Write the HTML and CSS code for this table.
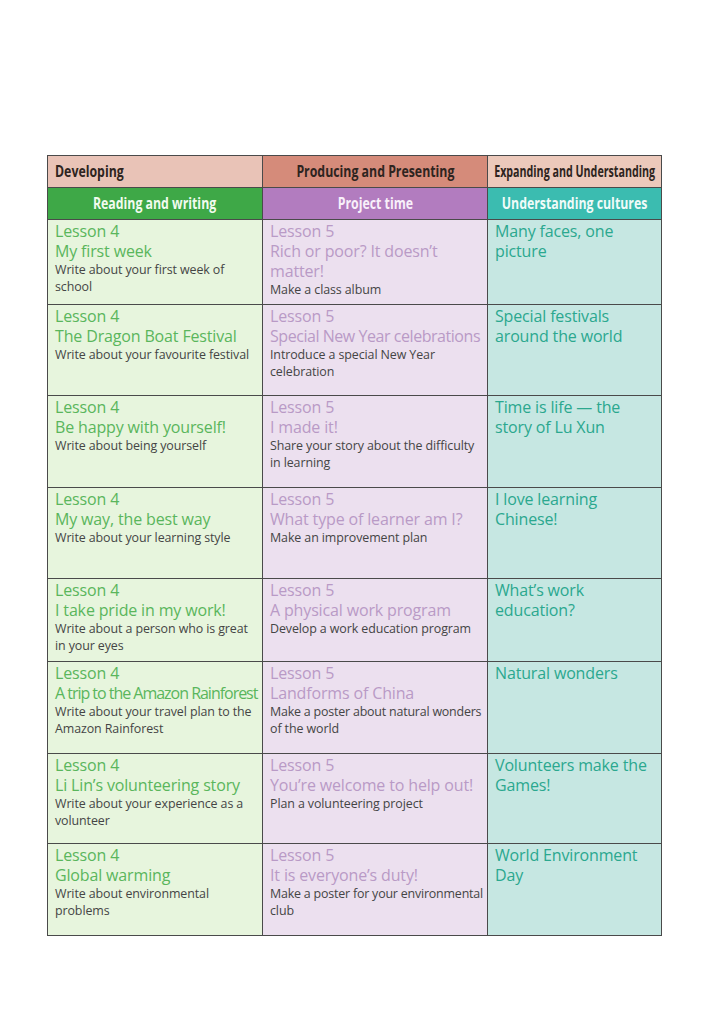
FILE: index.html
```html
<!DOCTYPE html>
<html lang="en">
<head>
<meta charset="utf-8">
<title>Lessons</title>
<link rel="stylesheet" href="styles.css">
</head>
<body>
<main class="page">
<table class="plan">
  <colgroup><col class="c1"><col class="c2"><col class="c3"></colgroup>
  <thead>
    <tr class="h1">
      <th class="h1a"><div class="hl"><span class="sq sl">Developing</span></div></th>
      <th class="h1b"><div class="hc"><span class="sq">Producing and Presenting</span></div></th>
      <th class="h1c"><div class="hc"><span class="sq sx">Expanding and Understanding</span></div></th>
    </tr>
    <tr class="h2">
      <th class="h2a"><div class="hc"><span class="sq">Reading and writing</span></div></th>
      <th class="h2b"><div class="hc"><span class="sq">Project time</span></div></th>
      <th class="h2c"><div class="hc"><span class="sq">Understanding cultures</span></div></th>
    </tr>
  </thead>
  <tbody>
    <tr class="r85">
      <td class="ca"><div class="t">Lesson 4</div><div class="t">My first week</div><div class="d">Write about your first week of school</div></td>
      <td class="cb"><div class="t">Lesson 5</div><div class="t">Rich or poor? It doesn’t matter!</div><div class="d">Make a class album</div></td>
      <td class="cc"><div class="t">Many faces, one picture</div></td>
    </tr>
    <tr class="r91">
      <td class="ca"><div class="t">Lesson 4</div><div class="t">The Dragon Boat Festival</div><div class="d">Write about your favourite festival</div></td>
      <td class="cb"><div class="t">Lesson 5</div><div class="t nw snug">Special New Year celebrations</div><div class="d">Introduce a special New Year celebration</div></td>
      <td class="cc"><div class="t">Special festivals around the world</div></td>
    </tr>
    <tr class="r92">
      <td class="ca"><div class="t">Lesson 4</div><div class="t">Be happy with yourself!</div><div class="d">Write about being yourself</div></td>
      <td class="cb"><div class="t">Lesson 5</div><div class="t">I made it!</div><div class="d">Share your story about the difficulty in learning</div></td>
      <td class="cc"><div class="t">Time is life — the story of Lu Xun</div></td>
    </tr>
    <tr class="r91">
      <td class="ca"><div class="t">Lesson 4</div><div class="t">My way, the best way</div><div class="d">Write about your learning style</div></td>
      <td class="cb"><div class="t">Lesson 5</div><div class="t">What type of learner am I?</div><div class="d">Make an improvement plan</div></td>
      <td class="cc"><div class="t">I love learning Chinese!</div></td>
    </tr>
    <tr class="r83">
      <td class="ca"><div class="t">Lesson 4</div><div class="t">I take pride in my work!</div><div class="d">Write about a person who is great in your eyes</div></td>
      <td class="cb"><div class="t">Lesson 5</div><div class="t">A physical work program</div><div class="d">Develop a work education program</div></td>
      <td class="cc"><div class="t">What’s work education?</div></td>
    </tr>
    <tr class="r92">
      <td class="ca"><div class="t">Lesson 4</div><div class="t nw tight">A trip to the Amazon Rainforest</div><div class="d">Write about your travel plan to the Amazon Rainforest</div></td>
      <td class="cb"><div class="t">Lesson 5</div><div class="t">Landforms of China</div><div class="d nw dsnug">Make a poster about natural wonders</div><div class="d">of the world</div></td>
      <td class="cc"><div class="t">Natural wonders</div></td>
    </tr>
    <tr class="r90">
      <td class="ca"><div class="t">Lesson 4</div><div class="t">Li Lin’s volunteering story</div><div class="d">Write about your experience as a volunteer</div></td>
      <td class="cb"><div class="t">Lesson 5</div><div class="t">You’re welcome to help out!</div><div class="d">Plan a volunteering project</div></td>
      <td class="cc"><div class="t">Volunteers make the Games!</div></td>
    </tr>
    <tr class="r92">
      <td class="ca"><div class="t">Lesson 4</div><div class="t">Global warming</div><div class="d">Write about environmental problems</div></td>
      <td class="cb"><div class="t">Lesson 5</div><div class="t">It is everyone’s duty!</div><div class="d nw dsnug">Make a poster for your environmental</div><div class="d">club</div></td>
      <td class="cc"><div class="t">World Environment Day</div></td>
    </tr>
  </tbody>
</table>
</main>
</body>
</html>
```

FILE: styles.css
```css
html, body {
  margin: 0;
  padding: 0;
  background: #ffffff;
}
body {
  font-family: "Open Sans", "Noto Sans", sans-serif;
  color: #3a3a3a;
}
.page {
  padding: 155px 0 0 47px;
}
.plan {
  border-collapse: collapse;
  table-layout: fixed;
  width: 615px;
  border: 1.5px solid #4a4a4a;
}
.c1 { width: 215px; }
.c2 { width: 225px; }
.c3 { width: 174px; }
.plan th, .plan td {
  border: 1.5px solid #4a4a4a;
  padding: 0;
}
.plan th {
  height: 31px;
  font-family: "Open Sans", "Noto Sans", sans-serif;
  font-weight: 700;
  font-size: 15.5px;
  line-height: 31px;
  white-space: nowrap;
}
.hc {
  display: flex;
  justify-content: center;
}
.hl {
  display: flex;
  justify-content: flex-start;
  padding-left: 7px;
}
.sq {
  display: inline-block;
  flex: none;
  transform: scaleX(0.795);
  transform-origin: center;
}
.sl { transform-origin: left center; }
.sx { transform: scaleX(0.69); }
.h1a { background: #e9c3b7; color: #2e2420; }
.h1b { background: #d58b7a; color: #2e2420; }
.h1c { background: #ecc9bb; color: #2e2420; }
.h2a { background: #3ea847; color: #f2fbef; }
.h2b { background: #b27cbf; color: #f8f0fa; }
.h2c { background: #3bbcb0; color: #f0fbf9; }
.plan td {
  vertical-align: top;
  padding: 1px 4px 0 7px;
}
.plan td.cc { padding-right: 8px; }
.r85 td { height: 83px; }
.r83 td { height: 81px; }
.r90 td { height: 88px; }
.r91 td { height: 89px; }
.r92 td { height: 90px; }
.ca { background: #e7f5dd; }
.cb { background: #ece0ef; }
.cc { background: #c6e7e2; }
.t {
  font-size: 16px;
  line-height: 20px;
  letter-spacing: -0.15px;
}
.nw { white-space: nowrap; }
.snug { letter-spacing: -0.45px; }
.tight { letter-spacing: -1.02px; }
.ca .t { color: #5ab65c; }
.cb .t { color: #b99ac6; }
.cc .t { color: #2ba88f; }
.d {
  font-size: 12.45px;
  line-height: 17px;
  letter-spacing: -0.1px;
  color: #454545;
}
.dsnug { letter-spacing: -0.2px; }
```
